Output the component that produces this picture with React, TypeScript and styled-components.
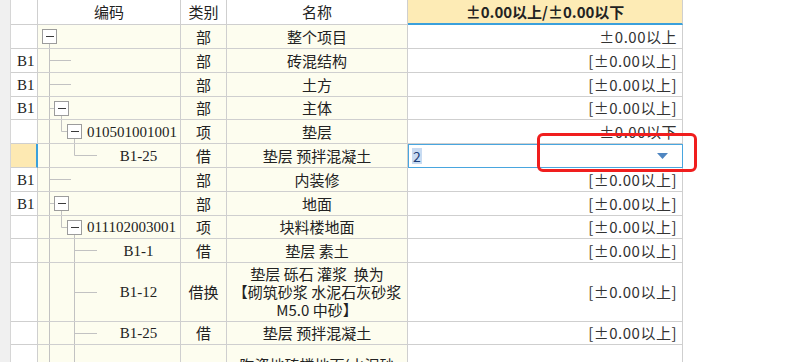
import React from 'react'
import styled, { createGlobalStyle } from 'styled-components'

const GlobalStyle = createGlobalStyle`
    html, body {
        margin: 0;
        padding: 0;
        background: #fff;
        overflow: hidden;
    }
    body {
        font-family: "Noto Sans CJK SC", "Noto Sans", sans-serif;
        color: #222;
    }
`

const COLS = '27px 143px 46px 181px 275px'
const LINE = '#cfcfcf'
const CREAM = '#fdfdef'

const Page = styled.div`
    position: relative;
    display: flex;
    width: 800px;
    height: 362px;
    overflow: hidden;
    background: #fff;
`

const Strip = styled.div`
    flex: none;
    width: 11px;
    box-sizing: border-box;
    background: #f0f0f0;
    border-right: 1px solid #d6d6d6;
`

const Sheet = styled.div`
    flex: none;
    display: flex;
    flex-direction: column;
    width: 672px;
`

const Row = styled.div<{ $h: number }>`
    flex: none;
    display: grid;
    grid-template-columns: ${COLS};
    height: ${p => p.$h}px;
`

const Cell = styled.div<{ $bg?: string; $align?: 'left' | 'center' | 'right' }>`
    box-sizing: border-box;
    display: flex;
    align-items: center;
    justify-content: ${p => p.$align === 'left' ? 'flex-start' : p.$align === 'right' ? 'flex-end' : 'center'};
    background: ${p => p.$bg || CREAM};
    border-right: 1px solid ${LINE};
    border-bottom: 1px solid ${LINE};
    font-size: 15px;
    line-height: 18px;
    white-space: nowrap;
    overflow: hidden;
`

const HeadCell = styled(Cell)<{ $accent?: boolean }>`
    background: ${p => p.$accent ? '#fdebb5' : '#fff'};
    border-bottom: ${p => p.$accent ? '2px solid #3aa0dc' : `1px solid ${LINE}`};
    font-weight: ${p => p.$accent ? 700 : 400};
    color: #222;
`

const LabelCell = styled(Cell)<{ $selected?: boolean }>`
    background: ${p => p.$selected ? '#fde9b2' : '#fff'};
    border-right: ${p => p.$selected ? '2px solid #3aa0dc' : `1px solid ${LINE}`};
    padding-left: 6px;
    font-family: "Liberation Serif", serif;
`

const CodeCell = styled(Cell)`
    align-items: stretch;
    justify-content: flex-start;
`

const CodeText = styled.span<{ $center?: boolean }>`
    flex: 1;
    display: flex;
    align-items: center;
    justify-content: ${p => p.$center ? 'center' : 'flex-start'};
    font-family: "Liberation Serif", serif;
`

const NameCell = styled(Cell)`
    white-space: pre;
    text-align: center;
    align-items: center;
`

const ValueCell = styled(Cell)`
    background: #fff;
    padding-right: 5px;
    letter-spacing: 0.5px;
    color: #333;
`

const EditCell = styled(Cell)`
    background: #fff;
    justify-content: space-between;
    padding: 0 14px 0 4px;
    outline: 1px solid #49a6df;
    outline-offset: -1px;
`

const SelectedText = styled.span`
    background: #c8dbf2;
    color: #1e3f7a;
    padding: 0 1px;
    font-size: 14px;
    line-height: 16px;
`

const Callout = styled.div`
    position: absolute;
    left: 537px;
    top: 133px;
    width: 160px;
    height: 39px;
    box-sizing: border-box;
    border: 3px solid #f01e1e;
    border-radius: 6px;
    pointer-events: none;
`

interface TreeSpec {
    full: number[]
    top?: number
    h?: [number, number]
    box?: number
}

const TreeGuide = ({ spec, height, width }: { spec: TreeSpec; height: number; width: number }) => {
    const mid = Math.floor((height - 1) / 2)
    const stroke = '#c2c2c2'
    return (
        <svg width={width} height={height - 1} style={{ flex: 'none', display: 'block' }}>
            {spec.full.map(x => (
                <line key={x} x1={x + 0.5} y1={0} x2={x + 0.5} y2={height} stroke={stroke} />
            ))}
            {spec.top !== undefined && (
                <line x1={spec.top + 0.5} y1={0} x2={spec.top + 0.5} y2={mid + 0.5} stroke={stroke} />
            )}
            {spec.h && (
                <line x1={spec.h[0] + 0.5} y1={mid + 0.5} x2={spec.h[1]} y2={mid + 0.5} stroke={stroke} />
            )}
            {spec.box !== undefined && (
                <g>
                    <line x1={spec.box + 0.5} y1={mid + 7} x2={spec.box + 0.5} y2={height} stroke={stroke} />
                    <rect x={spec.box - 6.5} y={mid - 6.5} width={14} height={14} fill="#fff" stroke="#9c9c9c" />
                    <line x1={spec.box - 3} y1={mid + 0.5} x2={spec.box + 5} y2={mid + 0.5} stroke="#3a3a3a" />
                </g>
            )}
        </svg>
    )
}

interface RowData {
    h: number
    label: string
    tree: TreeSpec
    code: string
    codeCenter?: boolean
    type: string
    name: string
    value: string
    selected?: boolean
}

const leaf2: TreeSpec = { full: [11, 36], h: [36, 59] }

const rows: RowData[] = [
    { h: 24, label: '', tree: { full: [], box: 11 }, code: '', type: '部', name: '整个项目', value: '±0.00以上' },
    { h: 24, label: 'B1', tree: { full: [11], h: [11, 33] }, code: '', type: '部', name: '砖混结构', value: '[±0.00以上]' },
    { h: 24, label: 'B1', tree: { full: [11], h: [11, 33] }, code: '', type: '部', name: '土方', value: '[±0.00以上]' },
    { h: 23, label: 'B1', tree: { full: [11], h: [11, 17], box: 23 }, code: '', type: '部', name: '主体', value: '[±0.00以上]' },
    { h: 24, label: '', tree: { full: [11], top: 23, h: [23, 29], box: 36 }, code: '010501001001', type: '项', name: '垫层', value: '±0.00以下' },
    { h: 24, label: '', tree: { full: [11], top: 36, h: [36, 59] }, code: 'B1-25', codeCenter: true, type: '借', name: '垫层 预拌混凝土', value: '2', selected: true },
    { h: 24, label: 'B1', tree: { full: [11], h: [11, 33] }, code: '', type: '部', name: '内装修', value: '[±0.00以上]' },
    { h: 24, label: 'B1', tree: { full: [11], h: [11, 17], box: 23 }, code: '', type: '部', name: '地面', value: '[±0.00以上]' },
    { h: 23, label: '', tree: { full: [11], top: 23, h: [23, 29], box: 36 }, code: '011102003001', type: '项', name: '块料楼地面', value: '[±0.00以上]' },
    { h: 24, label: '', tree: leaf2, code: 'B1-1', codeCenter: true, type: '借', name: '垫层 素土', value: '[±0.00以上]' },
    { h: 59, label: '', tree: leaf2, code: 'B1-12', codeCenter: true, type: '借换', name: '垫层 砾石 灌浆  换为\n【砌筑砂浆 水泥石灰砂浆\nM5.0 中砂】', value: '[±0.00以上]' },
    { h: 23, label: '', tree: leaf2, code: 'B1-25', codeCenter: true, type: '借', name: '垫层 预拌混凝土', value: '[±0.00以上]' },
    { h: 77, label: '', tree: { full: [11, 36] }, code: '', type: '', name: '陶瓷地砖楼地面(水泥砂\n浆) 块料面层\n厚度10mm\n', value: '' },
]

const Caret = () => (
    <svg width="11" height="6" viewBox="0 0 11 6">
        <path d="M0 0 H11 L5.5 6 Z" fill="#4f86c1" />
    </svg>
)

const App = () => {
    return (
        <Page>
            <GlobalStyle />
            <Strip />
            <Sheet>
                <Row $h={25}>
                    <HeadCell />
                    <HeadCell>编码</HeadCell>
                    <HeadCell>类别</HeadCell>
                    <HeadCell>名称</HeadCell>
                    <HeadCell $accent>±0.00以上/±0.00以下</HeadCell>
                </Row>
                {rows.map((r, i) => (
                    <Row key={i} $h={r.h}>
                        <LabelCell $align="left" $selected={r.selected}>{r.label}</LabelCell>
                        <CodeCell>
                            <TreeGuide spec={r.tree} height={r.h} width={r.codeCenter ? 59 : 49} />
                            <CodeText $center={r.codeCenter}>{r.code}</CodeText>
                        </CodeCell>
                        <Cell>{r.type}</Cell>
                        <NameCell>{r.name}</NameCell>
                        {r.selected ? (
                            <EditCell>
                                <SelectedText>{r.value}</SelectedText>
                                <Caret />
                            </EditCell>
                        ) : (
                            <ValueCell $align="right">{r.value}</ValueCell>
                        )}
                    </Row>
                ))}
            </Sheet>
            <Callout />
        </Page>
    )
}

export default App
